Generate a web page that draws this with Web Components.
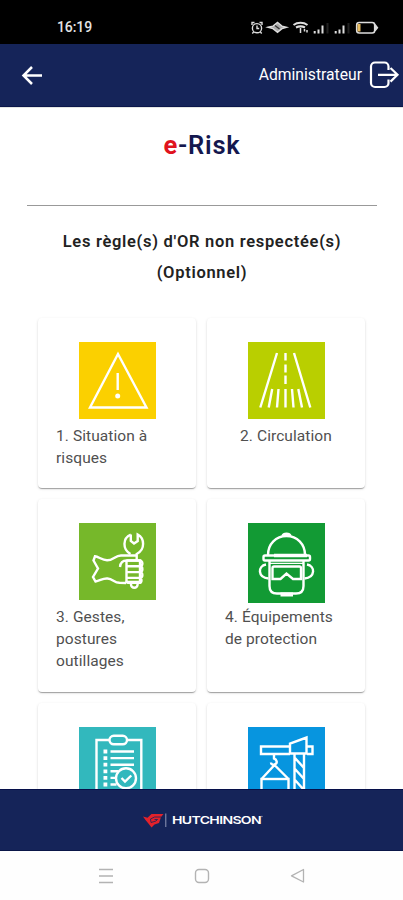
<!DOCTYPE html>
<html lang="fr">
<head>
<meta charset="utf-8">
<meta name="viewport" content="width=device-width, initial-scale=1">
<title>e-Risk</title>
<style>
  body { margin: 0; background: #fff; font-family: Roboto, sans-serif; }
</style>
</head>
<body>
<risk-app></risk-app>

<script>
class StatusBar extends HTMLElement {
  constructor() {
    super();
    this.attachShadow({ mode: 'open' });
    this.shadowRoot.innerHTML = `
      <style>
        :host { display: flex; flex: none; justify-content: space-between; box-sizing: border-box; height: 44px; padding: 11px 23px 0 57px; background: #000; color: #e4e4e4; }
        time { font-size: 14px; line-height: 33px; font-weight: 500; letter-spacing: -.1px; }
        svg { display: block; margin-top: 7px; }
      </style>
      <time>16:19</time>
      <svg width="130" height="20" viewBox="250 18 130 20" fill="none" stroke="#ddd" stroke-width="1.4">
        <circle cx="257" cy="28.2" r="4.6"/>
        <path d="M257 25.5v3h2.2M252 25v-2.500h2.500M262 25v-2.500h-2.500M253.600 32l-1.300 1.500M260.400 32l1.300 1.500"/>
        <path d="M268 27.3l5-1.2 4.500-3.600 4.500 3.600 4.600 1.200-4.600 1.400-4.500 3.600-4.500-3.600z" fill="#aaa"/>
        <path d="M275 25.500l4.500 3.500" stroke="#333"/>
        <path d="M293.500 25c4-3 10-3 14 0M296 27.500c3-1.500 6-1.500 9 0" stroke-width="2"/>
        <path d="M300.500 28v5M304.500 29v2.500M307 30v2.500" stroke-width="1.500"/>
        <path d="M314.700 33.500v-2.500M318.500 33.500v-4M322.500 33.500v-8M335.700 33.500v-2.500M339.500 33.500v-4M343.500 33.500v-8" stroke-width="2"/>
        <path d="M327.500 33.500V23M348.500 33.500V23" stroke="#222" stroke-width="2"/>
        <rect x="356.700" y="22.500" width="18" height="10.500" rx="2.500" stroke-width="1.600"/>
        <path d="M375 24.500l2.500 3.200-2.500 3.200" fill="#ddd"/>
        <path d="M359 24v7.500" stroke="#e8bd62" stroke-width="3"/>
      </svg>
    `;
  }
}

class AppHeader extends HTMLElement {
  constructor() {
    super();
    this.attachShadow({ mode: 'open' });
    this.shadowRoot.innerHTML = `
      <style>
        :host { display: flex; flex: none; align-items: center; justify-content: space-between; box-sizing: border-box; height: 63px; padding: 0 3px 0 20px; background: #152459; border-bottom: 1px solid #0b164a; color: #fff; }
        .user { display: flex; align-items: center; gap: 6px; font-size: 15.700px; }
        .user span { margin-top: -2px; }
        svg { display: block; }
      </style>
      <svg width="24" height="24" viewBox="0 0 24 24" fill="none" stroke="#fff" stroke-width="2.500"><path d="M22 12.500H3.500M12 4l-8.500 8.500L12 21"/></svg>
      <div class="user">
        <span><slot></slot></span>
        <svg width="32" height="30" viewBox="0 0 32 30" fill="none" stroke="#fff" stroke-width="2.200">
          <path d="M20.500 10V6.500a4 4 0 0 0-4-4H7a4 4 0 0 0-4 4v16.500a4 4 0 0 0 4 4h9.500a4 4 0 0 0 4-4v-3.500"/>
          <path d="M10 14.800h19.500M22.500 8l7 6.800-7 6.800"/>
        </svg>
      </div>
    `;
  }
}

const ICONS = {
  warning: `
    <path d="M39 12L11 65.500h56.500z"/>
    <path d="M38.700 31v17"/><circle cx="38.700" cy="54" r="2.500" fill="#fff" stroke="none"/>`,
  road: `
    <path d="M29 11L12.300 65.500M46 11l16.300 54.500M37.500 11v7.500M37.500 22.500v8M37.500 33.500v8.500"/>
    <path d="M24.200 47l-3.500 18.500M30.500 47l-1.500 18.500M37.500 47v18.500M44 47l1.500 18.500M50.300 47l3.700 18.500"/>`,
  wrench: `
    <path d="M51.800 11.500v6.500l3.200 2.500 3.700-2.500v-6.500c6.700 3.500 8 15-1 19.500v6M51.800 11.500c-8.300 3.500-8.500 15-.3 19.500"/>
    <path d="M57 32.500H42c-6 0-8 5-14 4.800-5 0-8.500-3.800-12-4l-1.500 4.200 4.500 8-5 8.500 2.500 4.500c4.500-.5 7-3.500 12-3 5.500.5 6.500 4 12 4.300l6.500.2"/>
    <path d="M41 44c.5-4.500 2.500-6.500 6.500-6.500h13.500v21.500h-13.500V38"/>
    <path d="M47.500 37.500h13a2.900 2.900 0 0 1 0 5.800h-13h13a2.900 2.900 0 0 1 0 5.800h-13h13a2.900 2.900 0 0 1 0 5.800h-13h12.500a2.500 2.500 0 0 1 0 5h-11a2 2 0 0 1-1.500-2M52 60v1.500a3.300 3.300 0 0 0 6.600 0V60"/>`,
  helmet: `
    <path d="M20 32c0-11 8-19 18.500-19S57 21 57 32M34.500 13c1-3 7-3 8 0"/>
    <rect x="15.500" y="32.500" width="46.500" height="5" rx="1.500"/>
    <path d="M26 32.500h33" stroke-width="3.400"/>
    <path d="M21.500 38v25c0 5 3 7.500 7.500 7.500h19c4.500 0 7.500-2.500 7.500-7.500V38"/>
    <path d="M32.500 71.500h12.500" stroke-width="4"/>
    <path d="M18 41.500c-8.500 1.500-8.500 13 2.500 14M59 41.500c8.500 1.500 8.500 13-2.500 14"/>
    <path d="M26 43.500h25.500a1.500 1.500 0 0 1 1.500 1.500v11h-8l-6.500-5.500-6 5.500h-8V45a1.500 1.500 0 0 1 1.500-1.500z"/>
    <path d="M22 40.300h33" stroke-width="1.200"/>`,
  checklist: `
    <path d="M30 13H17.500v57h44.800V13H48.500"/>
    <rect x="30.500" y="8.800" width="17.500" height="8.500" rx="4.200"/>
    <path d="M24.500 24.500h3.800M24.500 31.100h3.800M24.500 37.700h3.800M24.500 44.300h3.800M24.500 50.900h3.800M24.500 57.500h3.800" stroke-width="3.800"/>
    <path d="M31.500 24.500h23.500M31.500 31.100h23.500M31.500 37.700h23.500M31.500 44.300h8M31.500 50.900h6M31.500 57.500h6"/>
    <circle cx="47" cy="51.300" r="10" fill="#32b8bd"/><path d="M42.500 51l3.500 3.500 6.300-6"/>`,
  crane: `
    <path d="M42 19.500H13v7.500h29M59 19.500h5.500v7.500H59M42 26.500V16.500l16.500-6v16z"/>
    <path d="M46.500 27v43M56 27v43M47 31l9 10M47 42l9 10M47 53l9 10"/>
    <path d="M26 27v4.500c3 1 4 5 .5 6-2 .8-3.500-.5-3.500-2M26.500 38L14 51.500M26.500 38L40 51.500"/>
    <rect x="13.500" y="52" width="27" height="18"/>`
};

class RuleCard extends HTMLElement {
  constructor() {
    super();
    this.attachShadow({ mode: 'open' });
  }

  connectedCallback() {
    const height = this.getAttribute('tile-height') ?? 77;
    this.shadowRoot.innerHTML = `
      <style>
        :host { display: flex; flex-direction: column; align-items: center; box-sizing: border-box; padding: 24px 18px 18px; background: #fff; border-radius: 4px; box-shadow: 0 2px 1px -1px rgba(0,0,0,.2), 0 1px 1px rgba(0,0,0,.14), 0 1px 3px rgba(0,0,0,.12); }
        svg { display: block; flex: none; background: ${this.getAttribute('color')}; }
        p { margin: 0; margin-top: ${83 - height}px; font-size: 15.500px; line-height: 22px; letter-spacing: .08px; color: #505050; }
      </style>
      <svg width="77" height="${height}" viewBox="0 0 77 ${height}" fill="none" stroke="#fff" stroke-width="2.400">${ICONS[this.getAttribute('icon')]}</svg>
      <p><slot></slot></p>
    `;
  }
}

class RiskPage extends HTMLElement {
  constructor() {
    super();
    this.attachShadow({ mode: 'open' });
    this.shadowRoot.innerHTML = `
      <style>
        :host { display: block; flex: 1; min-height: 0; overflow: hidden; box-sizing: border-box; padding: 20px 26px 0 27px; background: #fff; border-top: 1px solid #e3e5e3; }
        h1 { margin: 0; font-size: 25.500px; line-height: 34px; font-weight: 600; letter-spacing: .75px; text-align: center; color: #14184f; }
        h1 b { font-weight: 700; color: #e0131d; }
        hr { margin: 43px 0 0; border: 0; border-top: 1px solid #999; }
        h2 { margin: 20px 0 0; font-size: 16.500px; line-height: 31px; font-weight: 600; letter-spacing: .7px; text-align: center; color: #222; }
        .grid { display: grid; grid-template-columns: 158px 158px; grid-template-rows: 170px 193px 170px; gap: 11px; margin: 30px 0 0 11px; }
      </style>
      <h1><b>e</b>-Risk</h1>
      <hr>
      <h2>Les règle(s) d'OR non respectée(s)<br>(Optionnel)</h2>
      <div class="grid"><slot></slot></div>
    `;
  }
}

class BrandFooter extends HTMLElement {
  constructor() {
    super();
    this.attachShadow({ mode: 'open' });
    this.shadowRoot.innerHTML = `
      <style>
        :host { display: flex; flex: none; align-items: center; justify-content: center; box-sizing: border-box; height: 62px; background: #152459; border-top: 1px solid #06104a; border-bottom: 1px solid #0a1648; }
        svg { display: block; }
      </style>
      <svg width="122" height="18" viewBox="0 0 122 18">
        <path d="M2 5.500l4.500 1.200 4-3.700h12l-2.500 3-2 6-4.500 1.500-3 3-3.500-4.500L4.500 9z" fill="#e3222b"/>
        <path d="M20 6h-6.500l-4 2 .5 3.500 5-1.500 1.500-1.500h-3" fill="none" stroke="#152459" stroke-width=".8"/>
        <path d="M24.800 2.500v13.500" stroke="#9299b8" stroke-width="1"/>
        <text x="31" y="13" font-family="Inter, sans-serif" font-size="10.800" font-weight="600" letter-spacing="-.5" fill="#fff" textLength="89" lengthAdjust="spacingAndGlyphs">HUTCHINSON</text>
        <circle cx="120.900" cy="5.500" r=".7" fill="#9ba2c0"/>
      </svg>
    `;
  }
}

class NavBar extends HTMLElement {
  constructor() {
    super();
    this.attachShadow({ mode: 'open' });
    this.shadowRoot.innerHTML = `
      <style>
        :host { display: flex; flex: none; align-items: center; justify-content: center; gap: 80px; height: 49px; background: #fefefe; }
        svg { display: block; }
      </style>
      <svg width="16" height="16" fill="none" stroke="#b3b3b3" stroke-width="1.300"><path d="M1 1.500h14M1 8h14M1 14.500h14"/></svg>
      <svg width="16" height="16" fill="none" stroke="#b3b3b3" stroke-width="1.400"><rect x="1.500" y="1.500" width="13" height="13" rx="3.500"/></svg>
      <svg width="16" height="16" fill="none" stroke="#b3b3b3" stroke-width="1.300" stroke-linejoin="round"><path d="M13.500 1.500v12.500L1.500 7.800z"/></svg>
    `;
  }
}

class RiskApp extends HTMLElement {
  constructor() {
    super();
    this.attachShadow({ mode: 'open' });
    this.shadowRoot.innerHTML = `
      <style>
        :host { display: flex; flex-direction: column; height: 900px; overflow: hidden; }
      </style>
      <status-bar></status-bar>
      <app-header>Administrateur</app-header>
      <risk-page>
        <rule-card icon="warning" color="#fbd000">1. Situation à risques</rule-card>
        <rule-card icon="road" color="#b9cf00">2. Circulation</rule-card>
        <rule-card icon="wrench" color="#76b82a">3. Gestes, postures outillages</rule-card>
        <rule-card icon="helmet" color="#129a34" tile-height="80">4. Équipements de protection</rule-card>
        <rule-card icon="checklist" color="#32b8bd"></rule-card>
        <rule-card icon="crane" color="#0795df"></rule-card>
      </risk-page>
      <brand-footer></brand-footer>
      <nav-bar></nav-bar>
    `;
  }
}

customElements.define('status-bar', StatusBar);
customElements.define('app-header', AppHeader);
customElements.define('rule-card', RuleCard);
customElements.define('risk-page', RiskPage);
customElements.define('brand-footer', BrandFooter);
customElements.define('nav-bar', NavBar);
customElements.define('risk-app', RiskApp);
</script>
</body>
</html>
